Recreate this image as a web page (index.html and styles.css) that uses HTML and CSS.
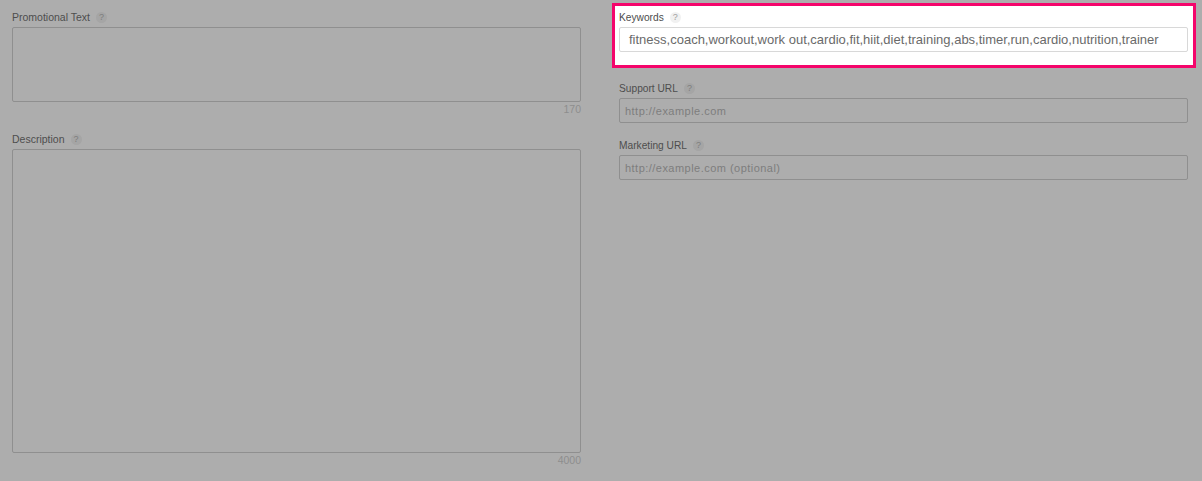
FILE: index.html
```html
<!DOCTYPE html>
<html lang="en">
<head>
<meta charset="utf-8">
<title>App information</title>
<link rel="stylesheet" href="styles.css">
</head>
<body>
<main class="page">
  <section class="col col-left">
    <div class="field field-promo">
      <div class="label"><span>Promotional Text</span><i class="help">?</i></div>
      <div class="box box-promo"></div>
      <div class="count">170</div>
    </div>
    <div class="field field-desc">
      <div class="label"><span>Description</span><i class="help">?</i></div>
      <div class="box box-desc"></div>
      <div class="count">4000</div>
    </div>
  </section>
  <section class="col col-right">
    <div class="highlight">
      <div class="label"><span>Keywords</span><i class="help help-light">?</i></div>
      <div class="input input-white">fitness,coach,workout,work out,cardio,fit,hiit,diet,training,abs,timer,run,cardio,nutrition,trainer</div>
    </div>
    <div class="field field-support">
      <div class="label"><span>Support URL</span><i class="help">?</i></div>
      <div class="input">http://example.com</div>
    </div>
    <div class="field field-marketing">
      <div class="label"><span>Marketing URL</span><i class="help">?</i></div>
      <div class="input">http://example.com (optional)</div>
    </div>
  </section>
</main>
</body>
</html>
```
FILE: styles.css
```css
* { box-sizing: border-box; }
html, body { margin: 0; height: 100%; }
body {
  background: #adadad;
  font-family: "Liberation Sans", Arial, sans-serif;
  overflow: hidden;
}
.page { display: flex; align-items: flex-start; height: 481px; }
.col { display: flex; flex-direction: column; }
.col-left { width: 569px; margin-left: 12px; padding-top: 11px; }
.col-right { width: 584px; margin-left: 31px; padding-top: 3px; }
.label {
  display: flex;
  align-items: center;
  height: 13px;
  font-size: 10.5px;
  line-height: 13px;
  color: #4d4d4d;
}
.col-right .label { font-size: 10.2px; }
.help {
  width: 11px;
  height: 11px;
  margin-left: 6px;
  border-radius: 50%;
  background: #a5a5a5;
  color: #7d7d7d;
  font-style: normal;
  font-size: 9px;
  line-height: 11px;
  text-align: center;
}
.help-light { background: #f1f1f1; color: #a0a0a0; }
.box {
  border: 1px solid #8f8f8f;
  border-radius: 2px;
  margin-top: 3px;
}
.box-promo { height: 75px; }
.box-desc { height: 304px; }
.count {
  height: 12px;
  margin-top: 1px;
  font-size: 10.5px;
  line-height: 12px;
  color: #8d8d8d;
  text-align: right;
}
.field-desc { margin-top: 18px; }
.highlight {
  height: 65px;
  padding: 5px 5px 0 4px;
  background: #fff;
  border: 3px solid #f4056b;
}
.input {
  height: 25px;
  margin-top: 3px;
  padding-left: 5px;
  border: 1px solid #8f8f8f;
  border-radius: 2px;
  font-size: 11px;
  line-height: 24px;
  letter-spacing: 0.47px;
  color: #7d7d7d;
}
.input-white {
  padding-left: 9px;
  border-color: #d8d8d8;
  font-size: 13px;
  line-height: 23px;
  letter-spacing: 0;
  color: #6a6a6a;
  white-space: nowrap;
}
.field-support { margin: 14px 8px 0 7px; }
.field-marketing { margin: 16px 8px 0 7px; }
```
